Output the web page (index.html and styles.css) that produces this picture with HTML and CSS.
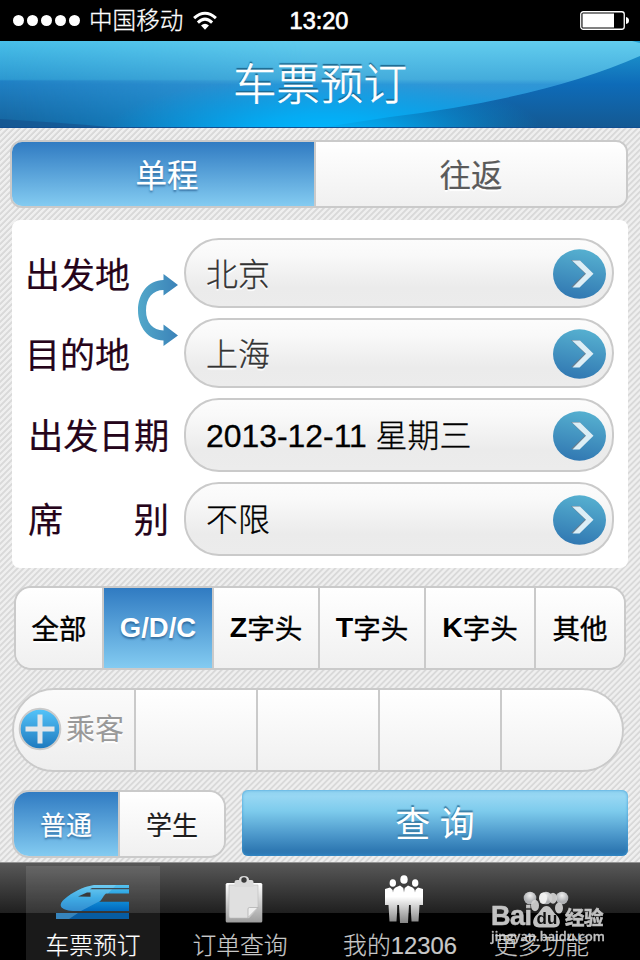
FILE: index.html
```html
<!DOCTYPE html>
<html lang="zh-CN">
<head>
<meta charset="utf-8">
<title>车票预订</title>
<link rel="stylesheet" href="styles.css">
</head>
<body>
<svg class="defs" width="0" height="0" aria-hidden="true">
  <defs>
    <linearGradient id="disc" x1="0.6" y1="0" x2="0.4" y2="1"><stop offset="0" stop-color="#56b0d0"/><stop offset="1" stop-color="#3178b2"/></linearGradient>
    <symbol id="go" viewBox="0 0 54 50">
      <ellipse cx="26.500" cy="25" rx="26.5" ry="24.7" fill="url(#disc)"/>
      <path d="M18 11h8.500L40 24.500 26.500 38H18l14-13.500z" fill="#687f91"/>
      <path d="M19 11.500h8L40.500 24.800 26.500 38.500h-7L33 24.800z" fill="#dceef6"/>
    </symbol>
  </defs>
</svg>
<div class="screen">
  <div class="status">
    <div class="carrier">
      <span class="dots"><i></i><i></i><i></i><i></i><i></i></span>
      <span class="name">中国移动</span>
      <svg class="wifi" width="24" height="19" viewBox="0 0 26 20" fill="none" stroke="#fff" stroke-width="3.300"><path d="M1.200 7.500Q13-3.200 24.800 7.500"/><path d="M5.300 12.200q7.700-7.200 15.400 0"/><path d="M8.700 15.500q4.300-4 8.600 0L13 20z" fill="#fff" stroke="none"/></svg>
    </div>
    <span class="clock">13:20</span>
    <svg class="battery" width="50" height="20" viewBox="0 0 50 20"><rect x=".75" y=".75" width="43.500" height="17.500" rx="2.500" fill="none" stroke="#fff" stroke-width="1.300"/><path d="M2.500 2.500H34v14H2.500zM46 6q3 .5 3 3.500t-3 3.500z" fill="#fff"/></svg>
  </div>
  <header class="header">
    <svg class="swoosh" viewBox="0 0 640 87" preserveAspectRatio="none">
      <defs>
        <linearGradient id="hl" x1="0" y1="0" x2="0" y2="1"><stop offset="0" stop-color="#48bfe9"/><stop offset=".44" stop-color="#2d99d1"/><stop offset=".46" stop-color="#2081c5"/><stop offset="1" stop-color="#15629b"/></linearGradient>
        <linearGradient id="hr" x1="0" y1="0" x2="0" y2="1"><stop offset="0" stop-color="#209dd1"/><stop offset=".5" stop-color="#0e6bb8"/><stop offset="1" stop-color="#145992"/></linearGradient>
        <linearGradient id="gl" x1="0" y1="0" x2="0" y2="1"><stop offset="0" stop-color="#62cdee"/><stop offset=".44" stop-color="#44acdc"/><stop offset=".5" stop-color="#3096d6"/><stop offset="1" stop-color="#0c98e0"/></linearGradient>
        <linearGradient id="fade"><stop offset="0" stop-color="#fff" stop-opacity="0"/><stop offset=".48" stop-color="#fff"/></linearGradient>
        <mask id="m"><rect width="640" height="87" fill="url(#fade)"/></mask>
        <radialGradient id="glow" gradientUnits="userSpaceOnUse" cx="0" cy="0" r="1" gradientTransform="translate(325 94) scale(220 60)"><stop offset="0" stop-color="#00b9ff"/><stop offset=".35" stop-color="#00b2fa" stop-opacity=".75"/><stop offset="1" stop-color="#00a0e8" stop-opacity="0"/></radialGradient>
      </defs>
      <rect width="640" height="87" fill="url(#hl)"/>
      <path d="M320 0H640V87H320z" fill="url(#hr)"/>
      <path d="M0 0H632L640 2V15Q545 57 390 76L318 87H0z" fill="url(#gl)" mask="url(#m)"/>
      <path d="M0 78Q80 83 120 87H0z" fill="#164f8b" opacity=".6"/>
      <rect width="640" height="87" fill="url(#glow)"/>
      <rect y="86" width="640" height="1" fill="#124e90"/>
    </svg>
    <h1>车票预订</h1>
  </header>

  <main class="content">
    <div class="trip">
      <span class="cell on">单程</span><span class="cell">往返</span>
    </div>

    <section class="card">
      <div class="row"><span class="label">出发地</span><div class="field ph"><span>北京</span><svg><use href="#go"/></svg></div></div>
      <div class="row"><span class="label">目的地</span><div class="field ph"><span>上海</span><svg><use href="#go"/></svg></div></div>
      <div class="row tall"><span class="label in">出发日期</span><div class="field"><span>2013-12-11 星期三</span><svg><use href="#go"/></svg></div></div>
      <div class="row tall"><span class="label in split"><span>席</span><span>别</span></span><div class="field"><span>不限</span><svg><use href="#go"/></svg></div></div>
      <svg class="swap" width="40" height="74" viewBox="0 0 40 74"><defs><linearGradient id="sw"><stop offset="0" stop-color="#52a8ca"/><stop offset="1" stop-color="#3b82b8"/></linearGradient></defs><path fill="url(#sw)" d="M25.500 1 40 12 25.500 22.500V17C15 17 8 25 8 37.500S15 57 25.500 57.500V51.500L40 62.500 25.500 73V67.500C10 67 0 54 0 37.500S10 7 25.500 7z"/></svg>
    </section>

    <div class="kinds">
      <span class="cell">全部</span><span class="cell on"><b>G/D/C</b></span><span class="cell"><b>Z</b>字头</span><span class="cell"><b>T</b>字头</span><span class="cell"><b>K</b>字头</span><span class="cell">其他</span>
    </div>

    <div class="riders">
      <span class="cell add"><svg width="44" height="44" viewBox="0 0 44 44"><defs><linearGradient id="pl" x1="0" y1="0" x2="0" y2="1"><stop offset="0" stop-color="#55c5fa"/><stop offset="1" stop-color="#1d78bd"/></linearGradient></defs><circle cx="22" cy="22" r="20.300" fill="url(#pl)" stroke="#cacaca" stroke-width="2"/><path d="M19.500 7.500h5v12h12v5h-12v12h-5v-12h-12v-5h12z" fill="#e2e6ea"/></svg><span>乘客</span></span><span class="cell"></span><span class="cell"></span><span class="cell"></span><span class="cell"></span>
    </div>

    <div class="actions">
      <div class="fare"><span class="cell on">普通</span><span class="cell">学生</span></div>
      <div class="query">查 询</div>
    </div>
  </main>

  <nav class="tabs">
    <div class="tab active">
      <svg width="74" height="36" viewBox="0 0 74 36">
        <defs><linearGradient id="tr" x1="0" y1="0" x2="0" y2="1"><stop offset="0" stop-color="#56c2ef"/><stop offset=".5" stop-color="#1595dc"/><stop offset="1" stop-color="#0068bd"/></linearGradient></defs>
        <path d="M38 1H73V9.500H50C47 11 46 17 43 17.800H73V27H17C4 26 2 21 8 15.500C17 8 26 3 38 1z" fill="url(#tr)"/>
        <path d="M0 29H73V35H0z" fill="#075ca2"/>
        <path d="M38 1H60L52 9.500H50L44 17 25 27H17C4 26 2 21 8 15.500C17 8 26 3 38 1zM0 29H22L13 35H0z" fill="#a7e2f8" opacity=".3"/>
        <path d="M36 4H73V5.300H34z" fill="#3d4b55"/>
        <path d="M22 12.500 31 8.500H34.500V12.800z" fill="#38383a"/>
      </svg>
      <span>车票预订</span>
    </div>
    <div class="tab">
      <svg width="38" height="48" viewBox="0 0 38 48">
        <defs><linearGradient id="cb" x1="0" y1="0" x2="0" y2="1"><stop offset="0" stop-color="#fff"/><stop offset="1" stop-color="#9d9d9d"/></linearGradient></defs>
        <rect x=".7" y="8" width="36.600" height="39.500" rx="1.500" fill="url(#cb)"/>
        <path d="M4 10H33V33L24 43H5.500Q4 43 4 41z" fill="#e0e0e0" stroke="#bcbcbc" stroke-width=".6"/><path d="M23 42.500V34q0-1.500 1.500-1.500H33z" fill="#efefef" stroke="#aaa" stroke-width=".7"/>
        <path d="M9.500 12V7Q9.500 5 12 5H14Q14 1 19 1t5 4h2.500q2 0 2 2v5z" fill="#dadada"/><circle cx="19" cy="5" r="2.700" fill="#3a3a3a"/>
      </svg>
      <span>订单查询</span>
    </div>
    <div class="tab">
      <svg width="38" height="48" viewBox="0 0 38 48">
        <defs><linearGradient id="pp" gradientUnits="userSpaceOnUse" x1="0" y1="0" x2="0" y2="48"><stop offset=".45" stop-color="#fff"/><stop offset="1" stop-color="#858585"/></linearGradient></defs>
        <g fill="url(#pp)"><ellipse cx="19" cy="4.500" rx="3.700" ry="4.300"/><ellipse cx="7.800" cy="8" rx="3.200" ry="3.800"/><ellipse cx="30.200" cy="8" rx="3.200" ry="3.800"/>
        <path d="M0 14 5 12.500 7.800 15 10.500 12.500 15 10.500 19 13.500 23 10.500 27.500 12.500 30.200 15 33 12.500 38 14V30H34.500L33.500 46.500H26.500L25.500 30H24L23 48H15L14 30H12.500L11.500 46.500H4.500L3.500 30H0z"/></g>
        <path d="m18.200 12.500.8 5 .8-5zM7.300 13.500l.7 4 .7-4zM29.300 13.500l.7 4 .7-4z" fill="#555"/>
        <path d="M13 30v16M25 30v16" stroke="#111" stroke-width="1"/>
      </svg>
      <span>我的12306</span>
    </div>
    <div class="tab">
      <svg class="more" width="46" height="14" viewBox="0 0 46 14"><defs><radialGradient id="dt" cy=".3"><stop offset="0" stop-color="#eee"/><stop offset="1" stop-color="#aeb0b3"/></radialGradient></defs><g fill="url(#dt)"><circle cx="7" cy="7" r="6.300"/><circle cx="23" cy="7" r="6.300"/><circle cx="39" cy="7" r="6.300"/></g></svg>
      <span>更多功能</span>
    </div>
    <div class="mark">
      <div class="brand"><b>Bai</b>
        <svg width="32" height="36" viewBox="0 0 32 36"><g fill="#d2d2d2"><ellipse cx="4" cy="13.500" rx="4" ry="5.700"/><ellipse cx="12" cy="6.200" rx="4" ry="5.800" fill="#f4f4f4"/><ellipse cx="22" cy="6.200" rx="4" ry="5.500"/><ellipse cx="28" cy="16" rx="4" ry="5.500"/><path d="M15.500 14C20 14 21 19 25 22.500C30 27 31 35 23 35.500H8C0 35 1 27 6 22.500C10 19 11 14 15.500 14z"/></g><text x="5.500" y="32" class="du">du</text></svg>
        <b class="cn">经验</b></div>
      <div class="site">jingyan.baidu.com</div>
    </div>
  </nav>
</div>
</body>
</html>
```
FILE: styles.css
```css
* { box-sizing: border-box; }
body { margin: 0; font-family: "Liberation Sans", "Noto Sans CJK SC", sans-serif; }
.defs { position: absolute; }
.screen {
  width: 640px; height: 960px; overflow: hidden;
  display: flex; flex-direction: column;
  background: repeating-linear-gradient(135deg, #efefef 0 1.6px, #d9d9d9 2.5px 3.6px, #efefef 4.24px);
}
.status {
  height: 41px; flex: none; background: #000; color: #fff;
  display: grid; grid-template-columns: 1fr auto 1fr; align-items: center;
  padding: 0 10px 0 13px;
}
.carrier { display: flex; align-items: center; }
.dots { display: flex; gap: 3px; }
.dots i { width: 11px; height: 11px; border-radius: 50%; background: #fff; }
.name { font-size: 23.6px; line-height: 40px; font-weight: 300; margin: 1px 10px 0 9px; -webkit-text-stroke: .3px; }
.clock { font-size: 23.5px; line-height: 40px; -webkit-text-stroke: .7px #fff; margin: 0 5px 0 0; }
.battery { justify-self: end; }

.header { height: 87px; flex: none; display: grid; }
.header > * { grid-area: 1 / 1; }
.swoosh { width: 640px; height: 87px; display: block; }
h1 {
  margin: 0; padding-top: 1px; text-align: center; font-size: 43.5px; line-height: 87px; font-weight: 300;
  color: #fff; text-shadow: 0 -2px 1px #1b668d; z-index: 1; -webkit-text-stroke: .6px;
}

.content { flex: 1; padding: 12px 12px 0; }
.cell {
  display: flex; align-items: center; justify-content: center;
  background: linear-gradient(#fff, #f0f0f0); text-shadow: 0 2px 1px #fff;
}
.cell + .cell { border-left: 2px solid #cacaca; }
.cell.on {
  background: linear-gradient(#307bc2, #83cbf1); color: #fff;
  text-shadow: 0 2px 2px rgba(20, 70, 120, .6);
}
.trip, .kinds, .riders, .fare { display: grid; border: 2px solid #cacaca; overflow: hidden; }
.trip {
  grid-template-columns: 302px 1fr; margin: 0 0 0 -2px; width: 618px; height: 68px;
  border-radius: 12px; font-size: 31.5px; color: #5a5a5a; -webkit-text-stroke: .2px;
}
.trip .cell { padding-bottom: 2px; }
.trip .on { padding-left: 8px; }
.card {
  position: relative; margin-top: 12px; width: 616px; height: 348px; border-radius: 8px; background: #fff;
  padding: 18px 14px 0 13px; display: flex; flex-direction: column; gap: 10px;
}
.row { display: flex; justify-content: space-between; height: 70px; align-items: center; }
.row.tall { height: 74px; }
.label { font-size: 35px; line-height: 50px; padding-top: 6px; color: #25041a; -webkit-text-stroke: .2px; }
.label.in { padding: 3px 0 0 3px; font-size: 35.3px; }
.label.split { width: 144px; display: flex; justify-content: space-between; }
.field {
  width: 430px; height: 100%; border: 2px solid #cacaca; border-radius: 35px;
  background: linear-gradient(#fcfcfc, #f9f9f9 22%, #ebebeb 72%, #ececec);
  display: flex; align-items: center; justify-content: space-between;
  padding: 0 5px 0 20px; font-size: 31.9px; font-weight: 300; -webkit-text-stroke: .3px;
}
.ph { color: #333; text-shadow: 0 2px 1px #fff; }
.field span { white-space: nowrap; padding-bottom: 5px; }
.field.ph span { padding-bottom: 3px; }
.field svg { width: 54px; height: 50px; margin-top: 2px; }
.swap { position: absolute; left: 126px; top: 53px; }

.kinds {
  grid-template-columns: 86px 110px 106px 106px 110px 1fr; margin: 18px 0 0 2px;
  width: 612px; height: 84px; border-radius: 17px; font-size: 27.5px; -webkit-text-stroke: .4px;
}
.kinds .cell { padding-bottom: 2px; }
.kinds b { -webkit-text-stroke: 0; font-size: 28.5px; }
.kinds .on { padding-bottom: 0; }
.kinds .on b { font-size: 27.5px; }
.riders {
  grid-template-columns: 120px 122px 122px 122px 1fr; margin-top: 18px;
  width: 612px; height: 84px; border-radius: 42px;
}
.add { color: #999; font-size: 29px; justify-content: flex-start; gap: 4px; padding: 0 0 2px 4px; background: linear-gradient(#fbfbfb, #eee); }
.add span { padding-bottom: 4px; }
.actions { display: flex; gap: 16px; margin-top: 18px; }
.fare {
  width: 214px; height: 68px; grid-template-columns: 104px 1fr; border-radius: 17px;
  font-size: 26px; color: #1c1c1c; -webkit-text-stroke: .2px;
}
.fare .cell { padding-bottom: 1px; }
.query {
  width: 386px; height: 66px; border-radius: 6px; color: #fff; text-align: center;
  font-size: 35px; line-height: 69px; text-shadow: 0 -2px 1px #3a7ea6;
  background: linear-gradient(#90d2f0, #97d7f3 10%, #7dcbec 32%, #4c98cb 68%, #2e78b2 92%, #2d7ab8);
  box-shadow: inset 0 0 3px #3c9ad4;
}

.tabs {
  position: relative; height: 98px; flex: none; display: grid; padding: 0 44px 0 11px;
  grid-template-columns: 164px 138px 182px 101px;
  border-top: 1px solid #929292;
  background: linear-gradient(#585858, #1f1f1f 50px, #000 50px);
}
.tab { color: #c8c8c8; font-size: 23.8px; font-weight: 300; display: flex; flex-direction: column; align-items: center; padding-top: 12px; -webkit-text-stroke: .2px; }
.tab svg { flex: none; }
.tab span { line-height: 34px; margin: 6px 8px 0 0; white-space: nowrap; }
.tab.active { color: #fff; background: rgba(255, 255, 255, .1); margin: 3px 15px 0; padding-top: 7px; }
.tab.active svg { margin: 11px 0 3px; }
.tab.active span { margin-right: 0; }
.more { margin: 16px 0 18px; }
.mark { position: absolute; left: 491px; top: 29px; width: 124px; color: #d2d2d2; opacity: .92; }
.brand { display: flex; align-items: flex-end; height: 36px; }
.brand b { flex: none; font-size: 27px; line-height: 23px; width: 39px; letter-spacing: -.5px; -webkit-text-stroke: .6px; }
.brand .cn { font-size: 19.5px; line-height: 20px; margin: 0 0 0 2px; }
.brand svg { flex: none; margin-left: 1px; }
.du { font: bold 17px "Liberation Sans", sans-serif; fill: #111; stroke: none; }
.site { font: 600 12.7px/14px "Open Sans", sans-serif; margin-top: 1px; letter-spacing: .1px; -webkit-text-stroke: .3px; }
```
